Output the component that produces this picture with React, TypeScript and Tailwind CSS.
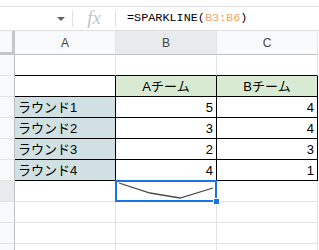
import React from "react";

const font = "font-['Liberation_Sans','Noto_Sans_CJK_JP',sans-serif]";

type CellProps = {
    text?: string;
    align?: "left" | "right" | "center";
    bg?: string;
    br?: string;
    bb?: string;
    children?: React.ReactNode;
};

function Cell({ text, align = "left", bg = "bg-white", br = "border-r-[#e2e3e3]", bb = "border-b-[#e2e3e3]", children }: CellProps) {
    const alignCls = align === "right" ? "justify-end pr-[3px]" : align === "center" ? "justify-center" : "justify-start pl-[3px]";
    return (
        <div className={`relative w-[101px] h-full flex items-center border-r border-b ${alignCls} ${bg} ${br} ${bb} text-[13px] text-black leading-none`}>
            {text}
            {children}
        </div>
    );
}

function RowHead({ hl = false }: { hl?: boolean }) {
    return (
        <div className={`w-[15px] h-full border-r border-b border-r-[#c0c0c0] border-b-[#e2e3e3] ${hl ? "bg-[#e8eaed]" : "bg-[#f8f9fa]"}`}></div>
    );
}

const rounds = [
    { name: "ラウンド1", a: "5", b: "4" },
    { name: "ラウンド2", a: "3", b: "4" },
    { name: "ラウンド3", a: "2", b: "3" },
    { name: "ラウンド4", a: "4", b: "1" },
];

export default function App() {
    return (
        <div className={`w-[319px] h-[250px] overflow-hidden bg-white ${font}`}>
            <div className="h-[6px]"></div>

            {/* formula bar */}
            <div className="h-[25px] flex items-center border-y border-[#e0e0e0]">
                <div className="w-[72px] flex justify-end pr-[7px]">
                    <span className="w-0 h-0 border-l-[4px] border-r-[4px] border-t-[4px] border-l-transparent border-r-transparent border-t-[#5f6368] mt-[1px]"></span>
                </div>
                <div className="w-px h-[16px] bg-[#e0e0e0]"></div>
                <div className="w-[42px] flex justify-center">
                    <span className="font-['Liberation_Serif',serif] italic text-[19px] text-[#c4c4c4] leading-none -mt-[2px]">fx</span>
                </div>
                <div className="w-px h-[16px] bg-[#e0e0e0]"></div>
                <div className="pl-[11px] font-['Liberation_Mono',monospace] text-[11.8px] text-black leading-none">
                    =SPARKLINE(<span className="text-[#f0a35e]">B3:B6</span>)
                </div>
            </div>

            {/* column headers */}
            <div className="h-[24px] flex">
                <div className="w-[15px] h-full bg-[#f8f9fa] border-r-[3px] border-b-[3px] border-[#c4c7c5]"></div>
                <div className="w-[101px] h-full flex items-center justify-center bg-[#f8f9fa] border-r border-b border-r-[#e2e3e3] border-b-[#c0c0c0] text-[12px] text-[#444]">A</div>
                <div className="w-[101px] h-full flex items-center justify-center bg-[#e8eaed] border-r border-b border-r-[#e2e3e3] border-b-[#c0c0c0] text-[12px] text-[#444]">B</div>
                <div className="w-[101px] h-full flex items-center justify-center bg-[#f8f9fa] border-r border-b border-r-[#e2e3e3] border-b-[#c0c0c0] text-[12px] text-[#444]">C</div>
            </div>

            {/* row 1 */}
            <div className="h-[21px] flex">
                <RowHead />
                <Cell bb="border-b-black" />
                <Cell bb="border-b-black" />
                <Cell bb="border-b-black" />
            </div>

            {/* row 2: team headers */}
            <div className="h-[21px] flex">
                <RowHead />
                <Cell br="border-r-black" bb="border-b-black" />
                <Cell text="Aチーム" align="center" bg="bg-[#d9ead3]" br="border-r-black" bb="border-b-black" />
                <Cell text="Bチーム" align="center" bg="bg-[#d9ead3]" br="border-r-black" bb="border-b-black" />
            </div>

            {rounds.map((r, i) => (
                <div key={i} className="h-[21px] flex">
                    <RowHead />
                    <Cell text={r.name} bg="bg-[#d0e0e3]" br="border-r-black" bb="border-b-black" />
                    <Cell text={r.a} align="right" br="border-r-black" bb="border-b-black" />
                    <Cell text={r.b} align="right" br="border-r-black" bb="border-b-black" />
                </div>
            ))}

            {/* row 7: sparkline */}
            <div className="h-[21px] flex">
                <RowHead hl />
                <Cell />
                <Cell>
                    <svg className="absolute left-0 top-0" width="100" height="20" viewBox="0 0 100 20">
                        <polyline points="3,2 34,12 64,17 97,7" fill="none" stroke="#4a4a4a" strokeWidth="1.3" />
                    </svg>
                    <div className="absolute z-10 -left-[1px] -top-[1px] -right-[1px] -bottom-[1px] border-2 border-[#1a73e8]"></div>
                    <div className="absolute z-10 -right-[4px] -bottom-[4px] w-[7px] h-[7px] bg-[#1a73e8] border border-white"></div>
                </Cell>
                <Cell />
            </div>

            {[0, 1, 2].map((i) => (
                <div key={i} className="h-[21px] flex">
                    <RowHead />
                    <Cell />
                    <Cell />
                    <Cell />
                </div>
            ))}
        </div>
    );
}
